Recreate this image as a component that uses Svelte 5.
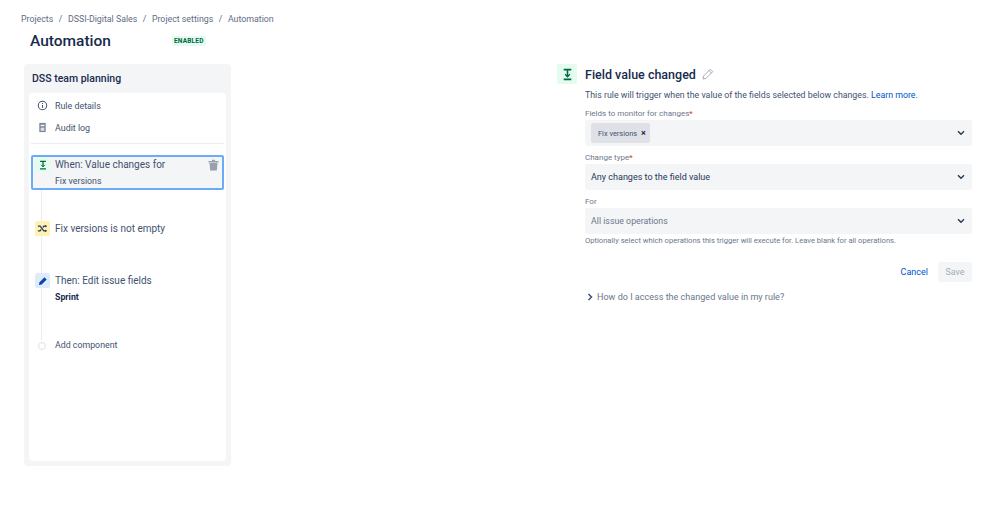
<script>
    const crumbs = ["Projects", "DSSI-Digital Sales", "Project settings", "Automation"];
</script>

<div class="page">
    <nav class="crumbs">
        {#each crumbs as c, i}
            {#if i > 0}<span class="sep">/</span>{/if}
            <span>{c}</span>
        {/each}
    </nav>

    <div class="head">
        <h1>Automation</h1>
        <span class="lozenge">ENABLED</span>
    </div>

    <div class="columns">
        <aside class="rule">
            <div class="rule-name">DSS team planning</div>
            <div class="rule-body">
                <div class="meta">
                    <svg width="11" height="11" viewBox="0 0 12 12" fill="none" stroke="#42526e" stroke-width="1.1">
                        <circle cx="6" cy="6" r="4.6" />
                        <path d="M6 5.4v3M6 3.4v1" />
                    </svg>
                    <span>Rule details</span>
                </div>
                <div class="meta">
                    <svg width="11" height="11" viewBox="0 0 12 12">
                        <path d="M2.5 1h7v10h-7z" fill="#7a869a" />
                        <path d="M4 3h4v1.6H4z" fill="#fff" />
                        <path d="M4 6.2h4v3.4H4z" fill="#dfe1e6" />
                    </svg>
                    <span>Audit log</span>
                </div>
                <div class="divider"></div>

                <div class="flow">
                    <div class="step selected">
                        <span class="tile green">
                            <svg width="10" height="10" viewBox="0 0 12 12" fill="none" stroke="#006644" stroke-width="1.5">
                                <path d="M2.5 1.5h7M2.5 10.5h7M6 2v6" />
                                <path d="M3.8 5.8 6 8.2l2.2-2.4" stroke-width="1.2" />
                            </svg>
                        </span>
                        <div class="step-text">
                            <div>When: Value changes for</div>
                            <div class="sub">Fix versions</div>
                        </div>
                        <svg class="trash" width="11" height="12" viewBox="0 0 11 12" fill="#97a0af">
                            <path d="M0.5 2h10v1.5H0.5z" />
                            <path d="M4 .8h3V2H4z" />
                            <path d="M1.5 4h8l-.7 7.6H2.2z" />
                        </svg>
                    </div>

                    <div class="step cond">
                        <span class="tile yellow">
                            <svg width="11" height="11" viewBox="0 0 12 12" fill="none" stroke="#253858" stroke-width="1.3">
                                <path d="M1 3.5h2.4l4 5H10M1 8.5h2.4l1.2-1.5M6.3 5l1.1-1.5H10" />
                                <path d="M9 2l2 1.5L9 5zM9 7l2 1.5L9 10z" fill="#253858" stroke="none" />
                            </svg>
                        </span>
                        <div class="step-text"><div>Fix versions is not empty</div></div>
                    </div>

                    <div class="step action">
                        <span class="tile blue">
                            <svg width="10" height="10" viewBox="0 0 12 12" fill="#0747a6">
                                <path d="M7.8 1.6 10.4 4.2 4.4 10.2 1.2 10.8 1.8 7.6z" />
                            </svg>
                        </span>
                        <div class="step-text">
                            <div>Then: Edit issue fields</div>
                            <div class="sub strong">Sprint</div>
                        </div>
                    </div>

                    <div class="step add">
                        <span class="dot"></span>
                        <div class="step-text small"><div>Add component</div></div>
                    </div>
                </div>
            </div>
        </aside>

        <section class="panel">
            <div class="panel-head">
                <span class="tile green big">
                    <svg width="13" height="13" viewBox="0 0 12 12" fill="none" stroke="#006644" stroke-width="1.4">
                        <path d="M2.5 1.5h7M2.5 10.5h7M6 2v6" />
                        <path d="M3.8 5.8 6 8.2l2.2-2.4" stroke-width="1.2" />
                    </svg>
                </span>
                <h2>Field value changed</h2>
                <svg class="pencil" width="12" height="12" viewBox="0 0 12 12" fill="none" stroke="#a5adba" stroke-width="1">
                    <path d="M8.4 1.2 10.8 3.6 4 10.4 1 11l.6-3z" />
                    <path d="M7 2.6 9.4 5" />
                </svg>
            </div>

            <div class="form">
                <p class="intro">This rule will trigger when the value of the fields selected below changes. <span class="link">Learn more.</span></p>

                <div class="label">Fields to monitor for changes<span class="req">*</span></div>
                <div class="select">
                    <span class="tag">Fix versions <b>×</b></span>
                    <svg class="chev" width="8" height="6" viewBox="0 0 8 6" fill="none" stroke="#253858" stroke-width="1.4"><path d="M1 1.2 4 4.2l3-3" /></svg>
                </div>

                <div class="label">Change type<span class="req">*</span></div>
                <div class="select">
                    <span class="value">Any changes to the field value</span>
                    <svg class="chev" width="8" height="6" viewBox="0 0 8 6" fill="none" stroke="#253858" stroke-width="1.4"><path d="M1 1.2 4 4.2l3-3" /></svg>
                </div>

                <div class="label">For</div>
                <div class="select">
                    <span class="value muted">All issue operations</span>
                    <svg class="chev" width="8" height="6" viewBox="0 0 8 6" fill="none" stroke="#253858" stroke-width="1.4"><path d="M1 1.2 4 4.2l3-3" /></svg>
                </div>
                <p class="help">Optionally select which operations this trigger will execute for. Leave blank for all operations.</p>

                <div class="buttons">
                    <span class="link cancel">Cancel</span>
                    <span class="save">Save</span>
                </div>

                <div class="howto">
                    <svg width="6" height="8" viewBox="0 0 6 8" fill="none" stroke="#42526e" stroke-width="1.5"><path d="M1.5 1 4.5 4l-3 3" /></svg>
                    <span>How do I access the changed value in my rule?</span>
                </div>
            </div>
        </section>
    </div>
</div>

<style>
:global(body) {
    margin: 0;
    background: #fff;
}

.page {
    width: 999px;
    height: 510px;
    box-sizing: border-box;
    padding: 12px 27px 0 24px;
    font-family: Roboto, "Noto Sans", sans-serif;
    color: #253858;
    font-size: 10px;
    overflow: hidden;
}

.crumbs {
    display: flex;
    gap: 5.5px;
    margin-left: -3px;
    height: 13px;
    line-height: 15px;
    font-size: 8.8px;
    color: #5e6c84;
}

.head {
    display: flex;
    align-items: center;
    margin-top: 6px;
    margin-left: 6px;
    height: 20px;
}

h1 {
    margin: 0;
    width: 142px;
    font-size: 15.5px;
    font-weight: 500;
    color: #172b4d;
}

.lozenge {
    background: #e3fcef;
    color: #006644;
    font-size: 6.5px;
    font-weight: 700;
    padding: 1px 2px;
    border-radius: 2px;
    letter-spacing: 0.2px;
}

.columns {
    display: flex;
    justify-content: space-between;
    margin-top: 13px;
}

.rule {
    width: 207px;
    height: 402px;
    box-sizing: border-box;
    background: #f4f5f7;
    border-radius: 4px;
    padding: 0 5px 5px;
    display: flex;
    flex-direction: column;
}

.rule-name {
    height: 29px;
    line-height: 30px;
    padding-left: 3px;
    font-size: 10.5px;
    font-weight: 500;
    color: #172b4d;
}

.rule-body {
    flex: 1;
    background: #fff;
    border-radius: 4px;
    padding: 1px 2px 0;
}

.meta {
    display: flex;
    align-items: center;
    gap: 7px;
    height: 22px;
    padding-left: 6px;
    font-size: 8.9px;
    color: #42526e;
}

.meta span {
    padding-top: 2px;
}

.divider {
    height: 1px;
    background: #ebecf0;
    margin: 5px 0 11px;
}

.flow {
    position: relative;
}

.flow::before {
    content: "";
    position: absolute;
    left: 9.5px;
    top: 20px;
    height: 165px;
    width: 1.5px;
    background: #ebecf0;
}

.step {
    position: relative;
    display: flex;
    gap: 5px;
    font-size: 10px;
    color: #42526e;
}

.step.selected {
    height: 35px;
    box-sizing: border-box;
    background: #f4f5f7;
    border: 2px solid #6cabf8;
    border-radius: 2px;
    margin-bottom: 31px;
    padding-left: 2px;
}

.step.cond {
    height: 20px;
    margin-bottom: 32px;
    padding-left: 4px;
}

.step.action {
    height: 38px;
    margin-bottom: 27px;
    padding-left: 4px;
}

.step.add {
    padding-left: 4px;
}

.tile {
    flex: none;
    width: 15px;
    height: 15px;
    border-radius: 2px;
    display: flex;
    align-items: center;
    justify-content: center;
}

.tile.green { background: #e3fcef; }
.tile.yellow { background: #fff0b3; }
.tile.blue { background: #deebff; }

.tile.big {
    width: 20px;
    height: 20px;
}

.step-text {
    line-height: 15px;
}

.step-text.small {
    font-size: 8.8px;
}

.sub {
    margin-top: 2px;
    font-size: 8.8px;
    line-height: 15px;
}

.sub.strong {
    font-weight: 700;
    color: #172b4d;
}

.dot {
    flex: none;
    width: 6px;
    height: 6px;
    margin: 4px 4px 0 3px;
    border-radius: 50%;
    background: #fff;
    border: 1px solid #dfe1e6;
}

.trash {
    position: absolute;
    right: 3px;
    top: 2px;
}

.panel {
    width: 415px;
}

.panel-head {
    display: flex;
    align-items: center;
    height: 20px;
}

.panel-head .tile {
    margin-right: 8px;
}

h2 {
    margin: 0 6px 0 0;
    font-size: 12.5px;
    font-weight: 500;
    color: #172b4d;
}

.form {
    padding-left: 28px;
}

.intro {
    margin: 4px 0 0;
    height: 14px;
    line-height: 14px;
    font-size: 8.8px;
    color: #42526e;
}

.link {
    color: #0052cc;
}

.label {
    margin-top: 4px;
    height: 14px;
    line-height: 16px;
    font-size: 8px;
    color: #6b778c;
}

.req {
    color: #de350b;
}

.select {
    position: relative;
    display: flex;
    align-items: center;
    height: 26px;
    padding-left: 6px;
    background: #f4f5f7;
    border-radius: 3px;
}

.value {
    font-size: 9px;
    color: #253858;
}

.value.muted {
    font-size: 8.8px;
    color: #6b778c;
}

.tag {
    height: 20px;
    line-height: 20px;
    padding: 0 4px 0 7px;
    font-size: 7.4px;
    background: #dfe1e6;
    color: #42526e;
    border-radius: 2px;
}

.tag b {
    color: #172b4d;
    font-size: 9px;
    margin-left: 2px;
}

.chev {
    position: absolute;
    right: 7px;
    top: 10px;
}

.help {
    margin: 1px 0 0;
    height: 12px;
    line-height: 12px;
    font-size: 7.6px;
    color: #6b778c;
}

.buttons {
    display: flex;
    justify-content: flex-end;
    align-items: center;
    gap: 10px;
    margin-top: 15px;
    height: 20px;
    font-size: 9px;
}

.save {
    width: 34px;
    height: 20px;
    line-height: 20px;
    text-align: center;
    background: #f4f5f7;
    color: #a5adba;
    border-radius: 3px;
}

.howto {
    display: flex;
    align-items: center;
    gap: 4px;
    margin-top: 8px;
    padding-left: 2px;
    height: 14px;
    font-size: 9.05px;
    color: #6b778c;
}
</style>
